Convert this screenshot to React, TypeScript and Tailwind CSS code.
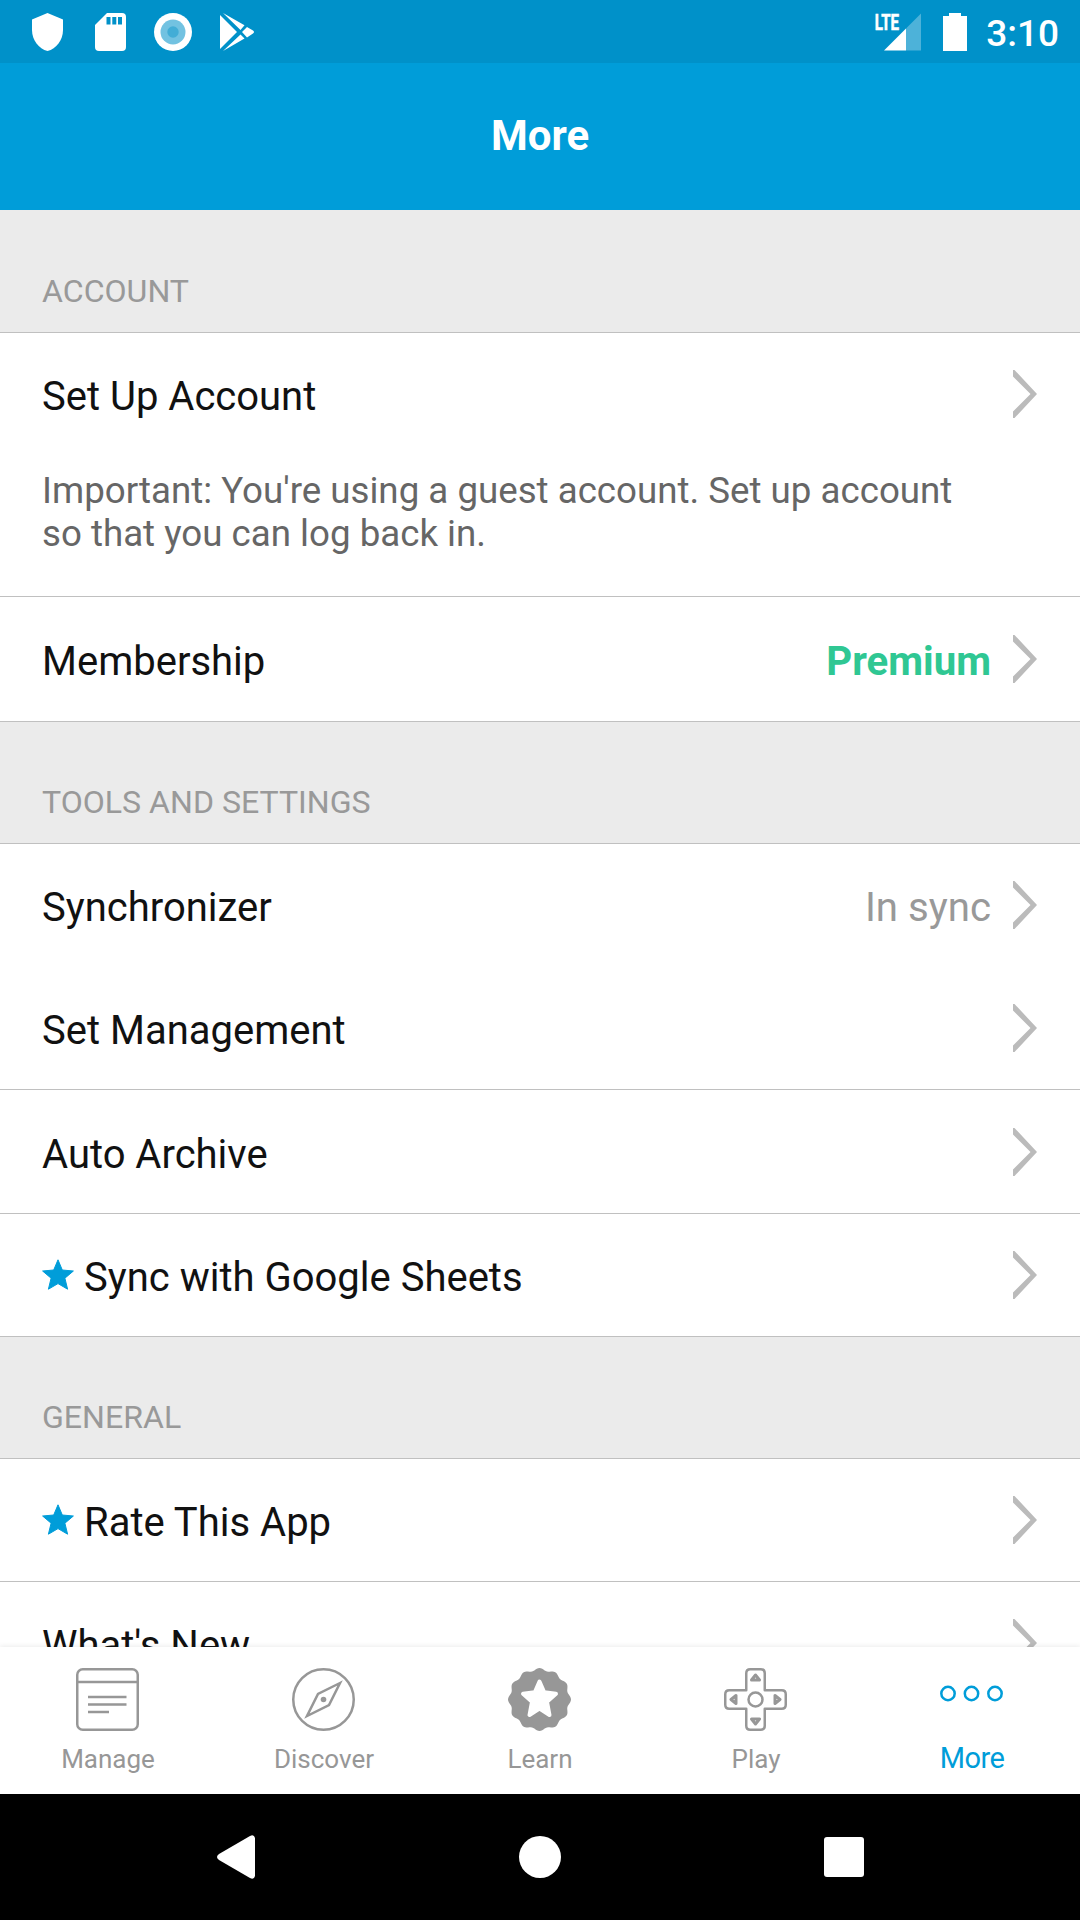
import React from "react";

const Chevron = () => (
  <svg width="24" height="48" viewBox="0 0 24 48" className="mb-[1px] shrink-0">
    <path d="M0 0L1.500 0L24 24L1.500 48H0V41.500L17.500 24L0 6.500Z" fill="#bbbbbb" />
  </svg>
);

const Star = () => (
  <svg width="32" height="31" viewBox="0 0 32 31" className="mr-[10px] mb-[2px] shrink-0" fill="#009dd9" stroke="#009dd9" strokeWidth="1" strokeLinejoin="round">
    <path d="M16 .800L20.300 11L31.400 12L22.900 19.200L25.600 30.200L16 24.600L6.400 30.200L9.100 19.200L.600 12L11.700 11Z" />
  </svg>
);

const Section = ({ title, className }: { title: string; className: string }) => (
  <div className={`flex shrink-0 items-end border-b border-[#c0c0c0] bg-[#ebebeb] px-[42px] pb-[22px] ${className}`}>
    <h2 className="text-[32.100px] leading-[38px] text-[#999999]">{title}</h2>
  </div>
);

type RowProps = { label: string; className: string; star?: boolean; value?: React.ReactNode };

const Row = ({ label, className, star, value }: RowProps) => (
  <div className={`flex shrink-0 items-center bg-white pr-[43px] pl-[42px] ${className}`}>
    {star && <Star />}
    <span className="grow pt-[5px] text-[40px] leading-[48px] text-[#111111]">{label}</span>
    {value && <span className="mr-[22px] pt-[5px] text-[40.200px] leading-[48px]">{value}</span>}
    <Chevron />
  </div>
);

const line = { fill: "none", stroke: "#979797", strokeWidth: 2.5 };

const ManageIcon = () => (
  <svg width="63" height="63" viewBox="0 0 63 63" {...line}>
    <rect x="1.250" y="1.250" width="60.500" height="60.500" rx="5.500" />
    <path d="M1 14H62M12 29H50.500M12 36.500H50.500M12 44H33" />
  </svg>
);

const DiscoverIcon = () => (
  <svg width="63" height="63" viewBox="0 0 63 63" {...line}>
    <circle cx="31.500" cy="31.500" r="30.250" />
    <path d="M48 15L26 26L15 48L37 37Z" />
    <circle cx="31.500" cy="31.500" r="2.800" fill="#979797" stroke="none" />
  </svg>
);

const scallop = Array.from({ length: 144 }, (_, i) => {
  const a = (i / 144) * Math.PI * 2;
  const r = 30.2 + 1.3 * Math.cos(12 * a);
  return `${(31.5 + r * Math.sin(a)).toFixed(2)},${(31.5 - r * Math.cos(a)).toFixed(2)}`;
}).join(" ");

const LearnIcon = () => (
  <svg width="63" height="63" viewBox="0 0 63 63">
    <polygon points={scallop} fill="#979797" />
    <path
      d="M31.500 13.500L36.200 24.300L48 25.800L39 33.800L41.500 47L31.500 40.600L21.500 47L24 33.800L15 25.800L26.800 24.300Z"
      fill="#fff"
      stroke="#fff"
      strokeWidth="4"
      strokeLinejoin="round"
    />
  </svg>
);

const PlayIcon = () => (
  <svg width="63" height="63" viewBox="0 0 63 63" {...line} strokeLinejoin="round">
    <path d="M26.250 1.250H36.750Q40.750 1.250 40.750 5.250V22.250H57.750Q61.750 22.250 61.750 26.250V36.750Q61.750 40.750 57.750 40.750H40.750V57.750Q40.750 61.750 36.750 61.750H26.250Q22.250 61.750 22.250 57.750V40.750H5.250Q1.250 40.750 1.250 36.750V26.250Q1.250 22.250 5.250 22.250H22.250V5.250Q22.250 1.250 26.250 1.250Z" />
    <circle cx="31.500" cy="31.500" r="7" />
    <path strokeWidth="3" d="M31.500 7L35.500 12H27.500ZM31.500 56L35.500 51H27.500ZM7 31.500L12 27.500V35.500ZM56 31.500L51 27.500V35.500Z" />
  </svg>
);

const MoreIcon = () => (
  <svg width="63" height="63" viewBox="0 0 63 63" fill="none" stroke="#009dd9" strokeWidth="2.500">
    <circle cx="8" cy="25.500" r="6.700" />
    <circle cx="31.500" cy="25.500" r="6.700" />
    <circle cx="55" cy="25.500" r="6.700" />
  </svg>
);

const tabs = [
  { name: "Manage", icon: <ManageIcon /> },
  { name: "Discover", icon: <DiscoverIcon /> },
  { name: "Learn", icon: <LearnIcon /> },
  { name: "Play", icon: <PlayIcon /> },
];

const StatusBar = () => (
  <div className="flex h-[63px] shrink-0 items-center justify-between bg-[#0091c9] pr-[21px] pl-[32px]">
    <div className="flex items-center">
      <svg width="31" height="38" viewBox="0 0 32 38" preserveAspectRatio="none" fill="#fff">
        <path d="M16 0L32 6.500V17C32 27 25 36 16 38C7 36 0 27 0 17V6.500Z" />
      </svg>
      <svg width="31" height="38" viewBox="0 0 31 38" className="ml-[32px]">
        <path d="M12 0H27Q31 0 31 4V34Q31 38 27 38H4Q0 38 0 34V12Z" fill="#fff" />
        <path d="M11.500 4H15.500V11.500H11.500ZM17.300 4H21.300V11.500H17.300ZM23 4H27V11.500H23Z" fill="#0091c9" />
      </svg>
      <svg width="38" height="38" viewBox="0 0 38 38" className="ml-[28px]">
        <circle cx="19" cy="19" r="19" fill="#fff" />
        <circle cx="19" cy="19" r="12.500" fill="#72c2e1" />
        <circle cx="19" cy="19" r="5.700" fill="#42add6" />
      </svg>
      <svg width="35" height="38" viewBox="0 0 35 38" className="ml-[28px]" fill="#fff">
        <path d="M0 2L17 19L0 36ZM3 0L24.500 12.300L20.500 17ZM27 14L33 17.500Q35 19 33 20.500L27 24.500L22 19ZM20.500 21.500L24.500 25.500L3 38Z" />
      </svg>
    </div>
    <div className="flex items-center">
      <svg width="46" height="38" viewBox="0 0 46 38" className="overflow-visible">
        <path d="M46 .500V37.500H31V15.500Z" fill="#4db2d9" />
        <path d="M31 15.500V37.500H9Z" fill="#fff" />
        <text x="-.200" y="17.400" fill="#fff" stroke="#fff" strokeWidth=".600" fontFamily="Roboto" fontWeight="700" fontSize="22.500" textLength="24.300" lengthAdjust="spacingAndGlyphs">LTE</text>
      </svg>
      <svg width="24" height="38" viewBox="0 0 24 38" className="ml-[22px]" fill="#fff">
        <path d="M6 0H18V3H24V38H0V3H6Z" />
      </svg>
      <span className="ml-[19px] pt-[4px] text-[37px] leading-[44px] font-medium text-white">3:10</span>
    </div>
  </div>
);

export default function App() {
  return (
    <div className="flex h-[1920px] w-[1080px] flex-col overflow-hidden bg-white font-['Roboto',sans-serif]">
      <StatusBar />
      <header className="flex h-[147px] shrink-0 items-center justify-center bg-[#009dd9] pb-[2px]">
        <h1 className="text-[42px] leading-[50px] font-bold text-white">More</h1>
      </header>

      <main className="flex h-[1437px] shrink-0 flex-col overflow-hidden">
        <Section title="ACCOUNT" className="h-[123px]" />
        <div className="flex h-[264px] shrink-0 flex-col border-b border-[#c0c0c0]">
          <Row label="Set Up Account" className="h-[123px]" />
          <p className="mt-[13px] pl-[42px] text-[36.700px] leading-[43px] text-[#666666]">
            Important: You're using a guest account. Set up account
            <br />
            so that you can log back in.
          </p>
        </div>
        <Row label="Membership" className="h-[125px] border-b border-[#c0c0c0]" value={<b className="text-[#2fc793]">Premium</b>} />
        <Section title="TOOLS AND SETTINGS" className="h-[122px]" />
        <Row label="Synchronizer" className="h-[122px]" value={<span className="text-[#999999]">In sync</span>} />
        <Row label="Set Management" className="h-[124px] border-b border-[#c0c0c0] pt-[2px]" />
        <Row label="Auto Archive" className="h-[124px] border-b border-[#c0c0c0] pt-[2px]" />
        <Row label="Sync with Google Sheets" star className="h-[123px] border-b border-[#c0c0c0]" />
        <Section title="GENERAL" className="h-[122px]" />
        <Row label="Rate This App" star className="h-[123px] border-b border-[#c0c0c0]" />
        <Row label="What's New" className="h-[123px]" />
      </main>

      <nav className="relative grid h-[147px] shrink-0 grid-cols-5 bg-white shadow-[0_-1px_5px_rgba(0,0,0,0.08)]">
        {tabs.map((t) => (
          <div key={t.name} className="flex flex-col items-center pt-[21px]">
            <div className="mr-[1px]">{t.icon}</div>
            <span className="mt-[12px] text-[26px] leading-[32px] text-[#979797]">{t.name}</span>
          </div>
        ))}
        <div className="flex flex-col items-center pt-[21px]">
          <div className="mr-[1px]">
            <MoreIcon />
          </div>
          <span className="mt-[11px] text-[29px] leading-[32px] tracking-[-0.600px] text-[#009dd9]">More</span>
        </div>
      </nav>

      <footer className="flex h-[126px] shrink-0 items-center bg-black pl-[217px]">
        <svg width="38" height="44" viewBox="0 0 38 44" fill="#fff">
          <path d="M2 19L33 1Q37 -1 38 3V41Q37 45 33 43L2 25Q-2 22 2 19Z" />
        </svg>
        <div className="ml-[264px] size-[42px] rounded-full bg-white" />
        <div className="ml-[263px] size-[40px] rounded-[3px] bg-white" />
      </footer>
    </div>
  );
}
